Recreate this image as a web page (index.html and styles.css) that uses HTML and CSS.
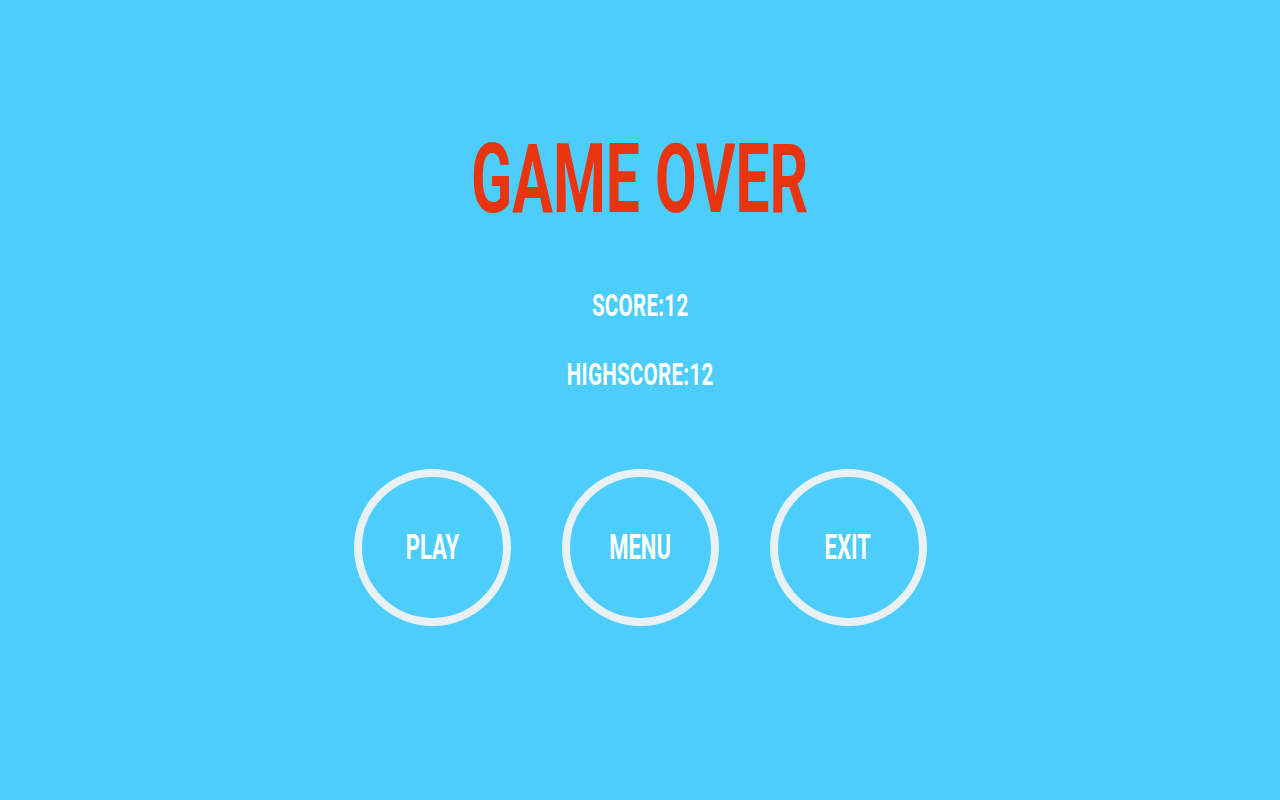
FILE: index.html
```html
<!DOCTYPE html>
<html>
<head>
<meta charset="utf-8">
<link rel="stylesheet" href="styles.css">
</head>
<body>
<main class="screen">
  <h1 class="title"><span class="squeeze">GAME OVER</span></h1>
  <div class="stats">
    <p class="stat"><span class="squeeze wide">SCORE:12</span></p>
    <p class="stat"><span class="squeeze wide">HIGHSCORE:12</span></p>
  </div>
  <div class="buttons">
    <button class="btn"><span class="squeeze">PLAY</span></button>
    <button class="btn"><span class="squeeze">MENU</span></button>
    <button class="btn"><span class="squeeze">EXIT</span></button>
  </div>
</main>
</body>
</html>
```
FILE: styles.css
```css
html, body {
  margin: 0;
  padding: 0;
  height: 100%;
}
body {
  background: #4ccdfb;
  font-family: Roboto, "Liberation Sans", sans-serif;
  font-weight: 700;
}
.screen {
  display: flex;
  flex-direction: column;
  align-items: center;
  padding-top: 123px;
}
.squeeze {
  display: inline-block;
  transform: scaleX(0.63);
  transform-origin: center;
  white-space: nowrap;
}
.squeeze.wide {
  transform: scaleX(0.66);
  letter-spacing: 0.5px;
}
.title {
  margin: 0;
  font-size: 96px;
  line-height: 112px;
  color: #e8340f;
  font-weight: 700;
}
.stats {
  display: flex;
  flex-direction: column;
  align-items: center;
  gap: 31px;
  margin-top: 52px;
}
.stat {
  margin: 0;
  font-size: 31px;
  line-height: 38px;
  color: #ffffff;
}
.buttons {
  display: flex;
  gap: 51px;
  margin-top: 75px;
}
.btn {
  width: 157px;
  height: 157px;
  box-sizing: border-box;
  border-radius: 50%;
  border: 8px solid #e9f1f4;
  background: transparent;
  color: #ffffff;
  font-family: Roboto, "Liberation Sans", sans-serif;
  font-weight: 700;
  font-size: 35px;
  padding: 0;
  display: flex;
  align-items: center;
  justify-content: center;
}
```
